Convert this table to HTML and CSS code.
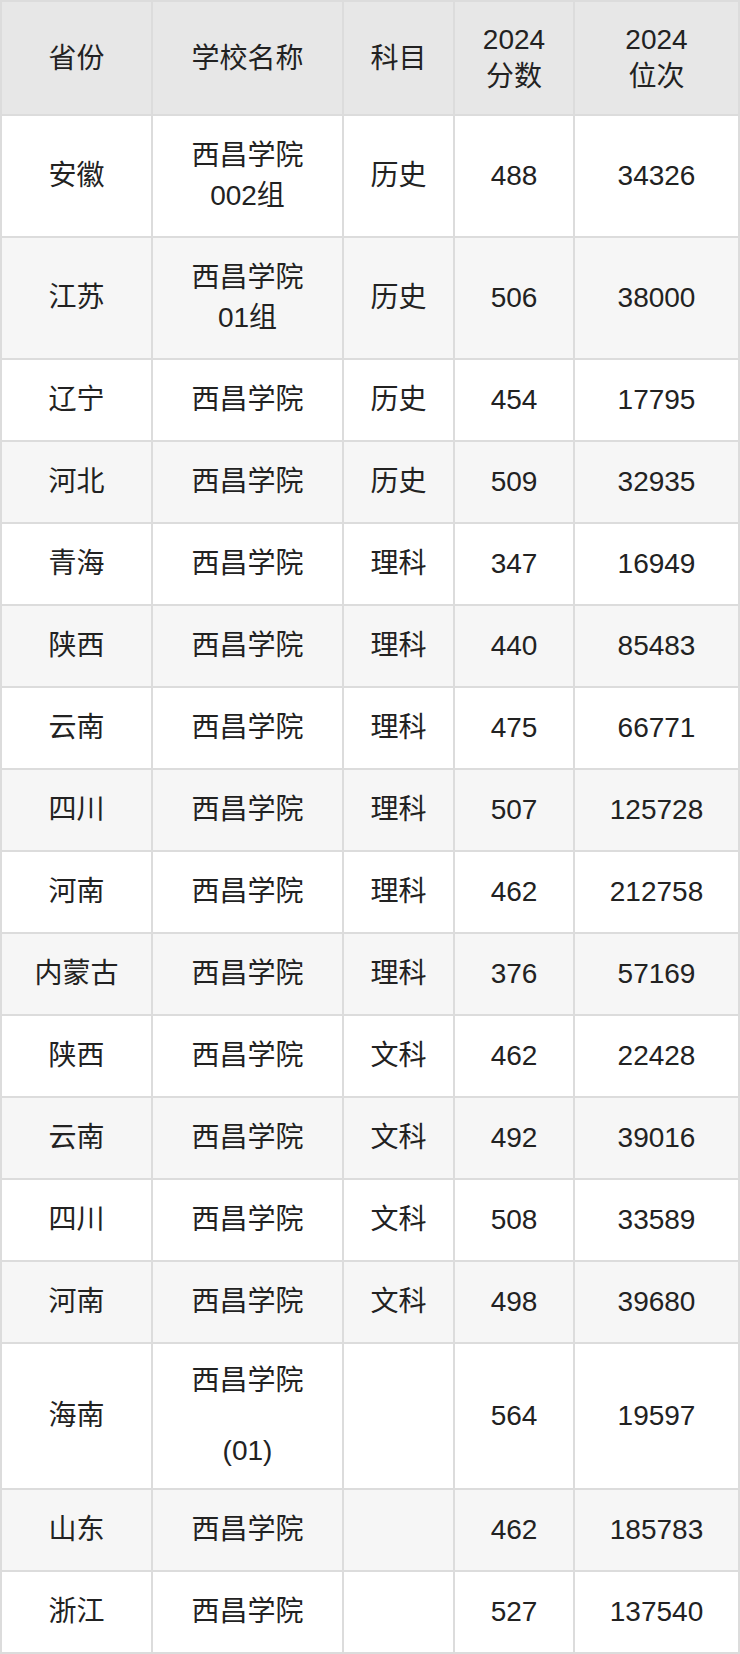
FILE: index.html
```html
<!DOCTYPE html>
<html lang="zh-CN">
<head>
<meta charset="utf-8">
<title>西昌学院 2024 分数线</title>
<link rel="stylesheet" href="styles.css">
</head>
<body>
<table class="score-table">
  <colgroup>
    <col class="c-prov">
    <col class="c-school">
    <col class="c-subj">
    <col class="c-score">
    <col class="c-rank">
  </colgroup>
  <thead>
    <tr>
      <th>省份</th>
      <th>学校名称</th>
      <th>科目</th>
      <th>2024<br>分数</th>
      <th>2024<br>位次</th>
    </tr>
  </thead>
  <tbody>
    <tr><td>安徽</td><td>西昌学院<br>002组</td><td>历史</td><td>488</td><td>34326</td></tr>
    <tr><td>江苏</td><td>西昌学院<br>01组</td><td>历史</td><td>506</td><td>38000</td></tr>
    <tr><td>辽宁</td><td>西昌学院</td><td>历史</td><td>454</td><td>17795</td></tr>
    <tr><td>河北</td><td>西昌学院</td><td>历史</td><td>509</td><td>32935</td></tr>
    <tr><td>青海</td><td>西昌学院</td><td>理科</td><td>347</td><td>16949</td></tr>
    <tr><td>陕西</td><td>西昌学院</td><td>理科</td><td>440</td><td>85483</td></tr>
    <tr><td>云南</td><td>西昌学院</td><td>理科</td><td>475</td><td>66771</td></tr>
    <tr><td>四川</td><td>西昌学院</td><td>理科</td><td>507</td><td>125728</td></tr>
    <tr><td>河南</td><td>西昌学院</td><td>理科</td><td>462</td><td>212758</td></tr>
    <tr><td>内蒙古</td><td>西昌学院</td><td>理科</td><td>376</td><td>57169</td></tr>
    <tr><td>陕西</td><td>西昌学院</td><td>文科</td><td>462</td><td>22428</td></tr>
    <tr><td>云南</td><td>西昌学院</td><td>文科</td><td>492</td><td>39016</td></tr>
    <tr><td>四川</td><td>西昌学院</td><td>文科</td><td>508</td><td>33589</td></tr>
    <tr><td>河南</td><td>西昌学院</td><td>文科</td><td>498</td><td>39680</td></tr>
    <tr><td>海南</td><td class="tall"><span class="line">西昌学院</span><span class="line line-gap">(01)</span></td><td></td><td>564</td><td>19597</td></tr>
    <tr><td>山东</td><td>西昌学院</td><td></td><td>462</td><td>185783</td></tr>
    <tr><td>浙江</td><td>西昌学院</td><td></td><td>527</td><td>137540</td></tr>
  </tbody>
</table>
</body>
</html>
```
FILE: styles.css
```css
html, body {
  margin: 0;
  padding: 0;
  background: #ffffff;
}

.score-table {
  width: 740px;
  border-collapse: collapse;
  table-layout: fixed;
  font-family: "Liberation Sans", "Noto Sans CJK SC", sans-serif;
  font-size: 28px;
  color: #222222;
}

.c-prov { width: 151px; }
.c-school { width: 191px; }
.c-subj { width: 111px; }
.c-score { width: 120px; }
.c-rank { width: 165px; }

.score-table th,
.score-table td {
  border: 2px solid #dcdcdc;
  text-align: center;
  vertical-align: middle;
  padding: 20px 0;
  line-height: 40px;
  font-weight: normal;
}

.score-table th {
  background: #e7e7e7;
  line-height: 37px;
  padding: 19px 0;
}

.score-table tbody tr:nth-child(even) td {
  background: #f6f6f6;
}

.score-table td.tall {
  padding: 17px 0;
}

.line {
  display: block;
}

.line-gap {
  margin-top: 30px;
}
```
